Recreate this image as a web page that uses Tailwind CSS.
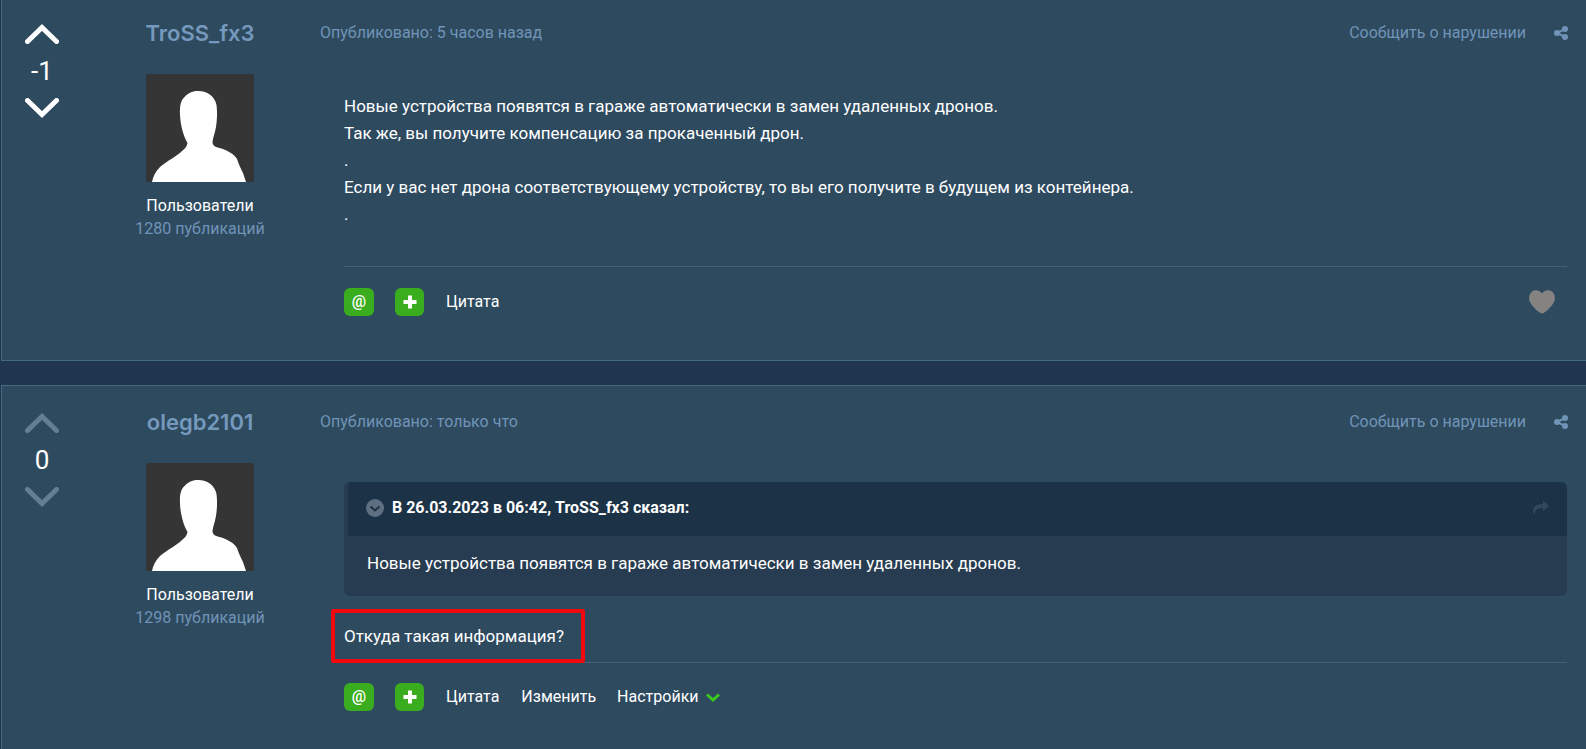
<!DOCTYPE html>
<html lang="ru">
  <head>
    <meta charset="UTF-8" />
    <meta name="viewport" content="width=device-width, initial-scale=1.0" />
    <title>Форум</title>
    <script src="https://cdn.jsdelivr.net/npm/@tailwindcss/browser@4"></script>
  </head>
  <body class="bg-[#20364e] text-white font-[Roboto,sans-serif]">
    <!-- Shared icons -->
    <svg class="hidden">
      <symbol id="up" viewBox="0 0 34 20">
        <path d="M2.500 17.500 17 3.500 31.500 17.500" fill="none" stroke="currentColor" stroke-width="5" stroke-linecap="round" />
      </symbol>
      <symbol id="down" viewBox="0 0 34 20">
        <path d="M2.500 2.500 17 16.500 31.500 2.500" fill="none" stroke="currentColor" stroke-width="5" stroke-linecap="round" />
      </symbol>
      <symbol id="share" viewBox="0 0 14 14">
        <path d="M11 3 3 7l8 4" fill="none" stroke="currentColor" stroke-width="2" />
        <circle cx="11" cy="3" r="3" fill="currentColor" />
        <circle cx="3" cy="7" r="3" fill="currentColor" />
        <circle cx="11" cy="11" r="3" fill="currentColor" />
      </symbol>
      <symbol id="plus" viewBox="0 0 14 14">
        <path d="M5 .5h4V5h4.500v4H9v4.500H5V9H.5V5H5z" fill="currentColor" />
      </symbol>
      <symbol id="avatar" viewBox="0 0 108 108">
        <rect width="108" height="108" fill="#353535" />
        <path d="M52 17c10 0 17 6 18.500 14 1 8 .5 15-.5 22-1 6-3 10-3.500 15 0 3 2 5 7 6 7 2 15 6 17.500 11 2 6 4 10 6 14l3 9H6c1-5 3-10 8-15 7-6 17-11 22-16 3-2 5-5 5.500-8-4-7-7-17-7.500-28-.5-10 1-15 5-18.500 4-4 8-5.500 13-5.500z" fill="#fff" />
      </symbol>
    </svg>

    <main class="flex min-h-screen flex-col gap-6 pl-px">
      <!-- Post 1 -->
      <article class="flex border-b border-l border-[#456a82] bg-[#2e4a5f] pt-[18px] pr-[18px] pb-11">
        <div class="flex w-20 shrink-0 flex-col items-center pt-[6px]">
          <button type="button" aria-label="За"><svg class="block h-5 w-[34px]"><use href="#up" /></svg></button>
          <span class="my-3 text-[26px] leading-[30px]">-1</span>
          <button type="button" aria-label="Против"><svg class="block h-5 w-[34px]"><use href="#down" /></svg></button>
        </div>
        <aside class="flex w-[236px] shrink-0 flex-col items-center">
          <a href="#" class="font-[Inter,sans-serif] text-[22px] leading-[30px] font-semibold text-[#7599bd]">TroSS_fx3</a>
          <a href="#" aria-label="TroSS_fx3" class="mt-[26px] mb-3"><svg class="block size-[108px] rounded-xs"><use href="#avatar" /></svg></a>
          <span class="text-[16px] leading-[23px]">Пользователи</span>
          <span class="text-[16px] leading-[23px] text-[#7094b7]">1280 публикаций</span>
        </aside>
        <div class="min-w-0 flex-1">
          <header class="flex items-center pl-[2px] text-[16px] leading-[30px] text-[#7094b7]">
            <a href="#">Опубликовано: 5 часов назад</a>
            <a href="#" class="ml-auto">Сообщить о нарушении</a>
            <a href="#" aria-label="Поделиться" class="ml-7"><svg class="block size-[14px]"><use href="#share" /></svg></a>
          </header>
          <div class="pt-[45px] pr-px pl-[26px]">
            <div class="mb-[38px] text-[17px] leading-[27px]">
              <p>Новые устройства появятся в гараже автоматически в замен удаленных дронов.</p>
              <p>Так же, вы получите компенсацию за прокаченный дрон.</p>
              <p>.</p>
              <p>Если у вас нет дрона соответствующему устройству, то вы его получите в будущем из контейнера.</p>
              <p>.</p>
            </div>
            <footer class="flex items-center border-t border-[#456075] pt-[21px] text-[16px] leading-[28px]">
              <button type="button" class="mr-[21px] h-7 w-[30px] rounded-md bg-[#3aad1f] font-medium">@</button>
              <button type="button" aria-label="Мультицитата" class="mr-[22px] flex h-7 w-[29px] items-center justify-center rounded-md bg-[#3aad1f]"><svg class="size-[14px]"><use href="#plus" /></svg></button>
              <a href="#">Цитата</a>
              <button type="button" aria-label="Нравится" class="mr-3 ml-auto">
                <svg class="block h-6 w-[26px]" viewBox="0 0 26 24"><path d="M13 3.500C10-.5 5-.3 2.500 2-.5 5-.5 9.500 1.500 13c2.500 4 6.500 8 10 10 1 .5 2 .5 3 0 3.500-2 7.500-6 10-10 2-3.500 2-8-1-11C21-.3 16-.5 13 3.500z" fill="#858381" /></svg>
              </button>
            </footer>
          </div>
        </div>
      </article>

      <!-- Post 2 -->
      <article class="flex flex-1 border-t border-l border-[#456a82] bg-[#2e4a5f] pt-[21px] pr-[18px] pb-9">
        <div class="flex w-20 shrink-0 flex-col items-center pt-[6px]">
          <button type="button" aria-label="За" class="text-[#647f95]"><svg class="block h-5 w-[34px]"><use href="#up" /></svg></button>
          <span class="my-3 text-[26px] leading-[30px]">0</span>
          <button type="button" aria-label="Против" class="text-[#647f95]"><svg class="block h-5 w-[34px]"><use href="#down" /></svg></button>
        </div>
        <aside class="flex w-[236px] shrink-0 flex-col items-center">
          <a href="#" class="font-[Inter,sans-serif] text-[22px] leading-[30px] font-semibold text-[#7599bd]">olegb2101</a>
          <a href="#" aria-label="olegb2101" class="mt-[26px] mb-3"><svg class="block size-[108px] rounded-xs"><use href="#avatar" /></svg></a>
          <span class="text-[16px] leading-[23px]">Пользователи</span>
          <span class="text-[16px] leading-[23px] text-[#7094b7]">1298 публикаций</span>
        </aside>
        <div class="min-w-0 flex-1">
          <header class="flex items-center pl-[2px] text-[16px] leading-[30px] text-[#7094b7]">
            <a href="#">Опубликовано: только что</a>
            <a href="#" class="ml-auto">Сообщить о нарушении</a>
            <a href="#" aria-label="Поделиться" class="ml-7"><svg class="block size-[14px]"><use href="#share" /></svg></a>
          </header>
          <div class="pt-[45px] pr-px pl-[26px]">
            <blockquote class="overflow-hidden rounded-md border-l-4 border-[#273c50] bg-[#273c50] text-[17px]">
              <div class="flex h-[54px] items-center bg-[#1c3247] pr-[18px] pb-[2px] pl-[18px] text-[16px] font-bold">
                <svg class="mr-2 size-[18px]" viewBox="0 0 18 18"><circle cx="9" cy="9" r="9" fill="#5d6f80" /><path d="M4.500 7.500 9 11.500l4.500-4" fill="none" stroke="#1c3247" stroke-width="2" /></svg>
                <span>В 26.03.2023 в 06:42, TroSS_fx3 сказал:</span>
                <a href="#" aria-label="Перейти к сообщению" class="ml-auto"><svg class="block h-4 w-[17px]" viewBox="0 0 17 16"><path d="M11 .5 17 6l-6 5.500V8C6 8 3 9 2.500 15.500-1 8 3 4 11 4z" fill="#32495d" /></svg></a>
              </div>
              <p class="px-[19px] pt-[14px] pb-[19px] leading-[27px]">Новые устройства появятся в гараже автоматически в замен удаленных дронов.</p>
            </blockquote>
            <div class="relative mt-[27px] mb-3 w-fit text-[17px] leading-[27px]">
              <p>Откуда такая информация?</p>
              <!-- Highlight frame -->
              <div class="absolute -top-[14px] -right-[21px] -bottom-[13px] -left-[13px] rounded-xs border-4 border-[#f00a0f]"></div>
            </div>
            <footer class="flex items-center border-t border-[#456075] pt-5 text-[16px] leading-[28px]">
              <button type="button" class="mr-[21px] h-7 w-[30px] rounded-md bg-[#3aad1f] font-medium">@</button>
              <button type="button" aria-label="Мультицитата" class="mr-[22px] flex h-7 w-[29px] items-center justify-center rounded-md bg-[#3aad1f]"><svg class="size-[14px]"><use href="#plus" /></svg></button>
              <a href="#" class="mr-[22px]">Цитата</a>
              <a href="#" class="mr-[21px]">Изменить</a>
              <button type="button" class="flex items-center gap-[7px]">Настройки
                <svg class="h-[9px] w-[14px]" viewBox="0 0 14 9"><path d="M1 1.500 7 7l6-5.500" fill="none" stroke="#3cc81e" stroke-width="3" /></svg>
              </button>
            </footer>
          </div>
        </div>
      </article>
    </main>
  </body>
</html>
